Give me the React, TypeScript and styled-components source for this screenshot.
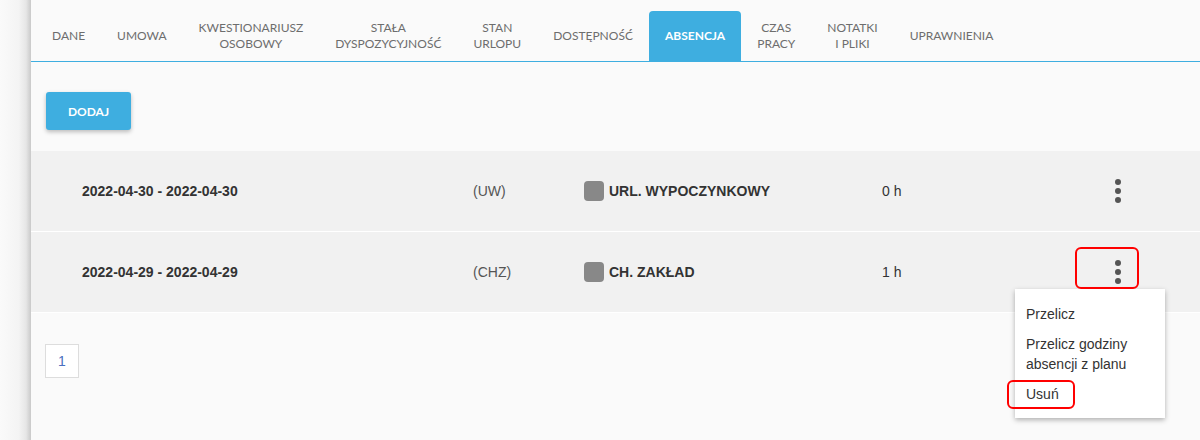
import React from "react";
import styled, { createGlobalStyle } from "styled-components";

const GlobalStyle = createGlobalStyle`
  html, body { margin: 0; padding: 0; background: #fafafa; }
  body { font-family: "Liberation Sans", Arial, sans-serif; }
  * { box-sizing: border-box; }
`;

const Page = styled.div`
  display: flex;
  width: 1200px;
  height: 440px;
  overflow: hidden;
`;

const Sidebar = styled.div`
  width: 31px;
  flex: none;
  background: linear-gradient(90deg, #fafafa 0%, #f4f4f4 60%, #e6e6e6 84%, #c9c9c9 100%);
`;

const Main = styled.div`
  flex: 1;
  background: #fafafa;
  display: flex;
  flex-direction: column;
`;

const TabBar = styled.div`
  display: flex;
  padding: 11px 0 0 5px;
  border-bottom: 1px solid #3eaee0;
`;

const Tab = styled.div<{ $active?: boolean }>`
  height: 50px;
  padding: 0 16px;
  display: flex;
  align-items: center;
  justify-content: center;
  text-align: center;
  font-family: Lato, "Open Sans", sans-serif;
  font-size: 12px;
  line-height: 16px;
  text-transform: uppercase;
  color: ${(p) => (p.$active ? "#ffffff" : "#6d6d6d")};
  font-weight: ${(p) => (p.$active ? 700 : 400)};
  background: ${(p) => (p.$active ? "#3eaee0" : "transparent")};
  border-radius: 4px 4px 0 0;
`;

const Toolbar = styled.div`
  padding: 30px 15px 21px;
`;

const AddButton = styled.button`
  display: block;
  width: 85px;
  height: 38px;
  border: none;
  border-radius: 3px;
  background: #3eaee0;
  color: #fff;
  font-family: Lato, "Open Sans", sans-serif;
  font-weight: 700;
  font-size: 12px;
  box-shadow: 0 2px 4px rgba(0, 0, 0, 0.25);
  cursor: pointer;
`;

const List = styled.div`
  display: flex;
  flex-direction: column;
`;

const Row = styled.div`
  position: relative;
  height: 81px;
  display: grid;
  grid-template-columns: 391px 111px 298px 216px 40px;
  align-items: center;
  padding-left: 51px;
  background: #f1f1f1;
  border-bottom: 1px solid #ffffff;
  font-size: 14px;
  color: #333;
`;

const DateText = styled.div`
  font-weight: 700;
  color: #333;
`;

const CodeText = styled.div`
  color: #555;
`;

const TypeCell = styled.div`
  display: flex;
  align-items: center;
  gap: 5px;
  font-weight: 700;
  color: #333;
`;

const Swatch = styled.span<{ $color: string }>`
  width: 20px;
  height: 20px;
  border-radius: 4px;
  background: ${(p) => p.$color};
  flex: none;
`;

const Hours = styled.div`
  color: #333;
`;

const KebabButton = styled.button`
  background: none;
  border: none;
  padding: 0;
  display: flex;
  justify-content: center;
  align-items: center;
  height: 40px;
  cursor: pointer;
`;

const Highlight = styled.div<{ $top: number; $left: number; $w: number; $h: number }>`
  position: absolute;
  top: ${(p) => p.$top}px;
  left: ${(p) => p.$left}px;
  width: ${(p) => p.$w}px;
  height: ${(p) => p.$h}px;
  border: 2px solid #f00;
  border-radius: 6px;
  pointer-events: none;
  z-index: 3;
`;

const Menu = styled.div`
  position: absolute;
  top: 57px;
  right: 35px;
  width: 150px;
  padding: 10px 0 9px;
  background: #fff;
  box-shadow: 0 2px 5px rgba(0, 0, 0, 0.3);
  z-index: 2;
`;

const MenuItem = styled.div`
  padding: 5px 11px;
  font-size: 14px;
  line-height: 20px;
  color: #333;
`;

const Pagination = styled.div`
  display: flex;
  padding: 31px 14px;
`;

const PageBox = styled.div`
  width: 34px;
  height: 34px;
  border: 1px solid #dddddd;
  background: #fff;
  display: flex;
  align-items: center;
  justify-content: center;
  font-size: 14px;
  color: #4a6fc0;
`;

const Kebab = () => (
  <svg width="8" height="26" viewBox="0 0 8 26">
    <circle cx="4" cy="4" r="3" fill="#555" />
    <circle cx="4" cy="13" r="3" fill="#555" />
    <circle cx="4" cy="22" r="3" fill="#555" />
  </svg>
);

const tabs: { label: React.ReactNode; active?: boolean }[] = [
  { label: "Dane" },
  { label: "Umowa" },
  { label: <>Kwestionariusz<br />osobowy</> },
  { label: <>Stała<br />dyspozycyjność</> },
  { label: <>Stan<br />urlopu</> },
  { label: "Dostępność" },
  { label: "Absencja", active: true },
  { label: <>Czas<br />pracy</> },
  { label: <>Notatki<br />i pliki</> },
  { label: "Uprawnienia" },
];

const rows = [
  { date: "2022-04-30 - 2022-04-30", code: "(UW)", type: "URL. WYPOCZYNKOWY", hours: "0 h" },
  { date: "2022-04-29 - 2022-04-29", code: "(CHZ)", type: "CH. ZAKŁAD", hours: "1 h", open: true },
];

export default function App() {
  return (
    <>
      <GlobalStyle />
      <Page>
        <Sidebar />
        <Main>
          <TabBar>
            {tabs.map((t, i) => (
              <Tab key={i} $active={t.active}>
                <span>{t.label}</span>
              </Tab>
            ))}
          </TabBar>
          <Toolbar>
            <AddButton>DODAJ</AddButton>
          </Toolbar>
          <List>
            {rows.map((r) => (
              <Row key={r.date}>
                <DateText>{r.date}</DateText>
                <CodeText>{r.code}</CodeText>
                <TypeCell>
                  <Swatch $color="#888888" />
                  {r.type}
                </TypeCell>
                <Hours>{r.hours}</Hours>
                <KebabButton aria-label="menu">
                  <Kebab />
                </KebabButton>
                {r.open && (
                  <>
                    <Highlight $top={15} $left={1044} $w={64} $h={42} />
                    <Menu>
                      <MenuItem>Przelicz</MenuItem>
                      <MenuItem>
                        Przelicz godziny
                        <br />
                        absencji z planu
                      </MenuItem>
                      <MenuItem>Usuń</MenuItem>
                      <Highlight $top={91} $left={-8} $w={68} $h={29} />
                    </Menu>
                  </>
                )}
              </Row>
            ))}
          </List>
          <Pagination>
            <PageBox>1</PageBox>
          </Pagination>
        </Main>
      </Page>
    </>
  );
}
